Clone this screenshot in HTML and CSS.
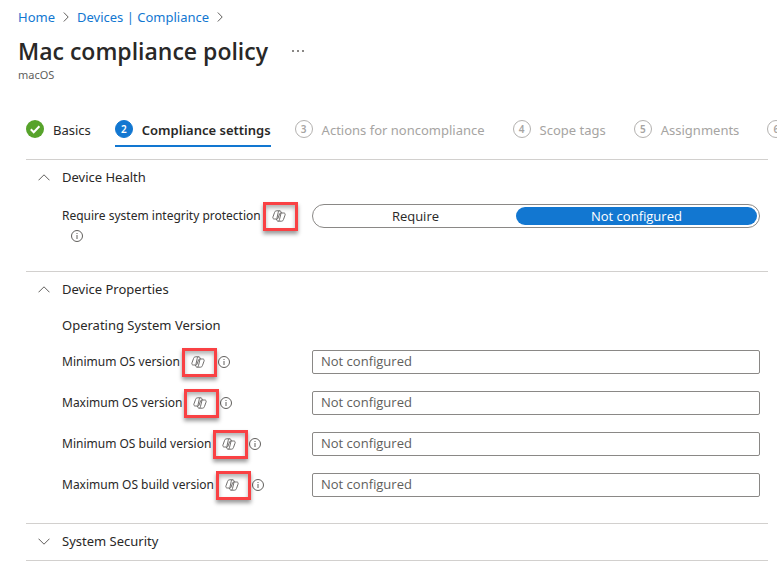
FILE: index.html
```html
<!DOCTYPE html>
<html lang="en">
<head>
<meta charset="utf-8">
<meta name="viewport" content="width=device-width, initial-scale=1">
<title>Mac compliance policy</title>
<link rel="stylesheet" href="styles.css">
</head>
<body>
<svg width="0" height="0" class="sprite" aria-hidden="true">
  <symbol id="copilot" viewBox="0 0 14 12">
    <path d="M7.500.8H4.600C3.400.8 2.900 1.500 2.500 2.600L1 6.800C.5 8.300 1.100 9 2.300 9h2.600c.7 0 1-.3 1.200-1L7.500 4c.3-.7.6-1 1.300-1h2.900c1.200 0 1.800.7 1.300 2.200l-1.500 4.200c-.4 1.100-.9 1.800-2.100 1.800H6.300"/>
    <path d="M7.500.8c1.200 0 1.600.8 1.900 2.200M6.300 11.200C5.100 11.200 4.700 10.400 4.400 9M9 3.200 7.500 9.500c-.3 1.100-.6 1.700-1.200 1.700M7.500.8C6.800.8 6.500 1.400 6.200 2.500L4.900 8.500"/>
  </symbol>
  <symbol id="info" viewBox="0 0 12 12">
    <circle cx="6" cy="6" r="5.500"/>
    <path d="M6 5v4M6 3v1"/>
  </symbol>
  <symbol id="chevron" viewBox="0 0 12 7">
    <path d="M.5 6.300 6 .8l5.500 5.500"/>
  </symbol>
</svg>

<header class="header">
  <nav class="breadcrumb" aria-label="Breadcrumb">
    <a href="#">Home</a>
    <svg class="separator" viewBox="0 0 6 10" aria-hidden="true"><path d="M.8.5 5.200 5 .8 9.500"/></svg>
    <a href="#">Devices | Compliance</a>
    <svg class="separator" viewBox="0 0 6 10" aria-hidden="true"><path d="M.8.5 5.200 5 .8 9.500"/></svg>
  </nav>
  <div class="title-row">
    <h1>Mac compliance policy</h1>
    <button class="more" type="button" aria-label="More actions"><svg viewBox="0 0 12 2"><path d="M0 0h2v2H0zM5 0h2v2H5zM10 0h2v2h-2z"/></svg></button>
  </div>
  <p class="subtitle">macOS</p>
</header>

<nav class="steps" aria-label="Steps">
  <a class="step done" href="#"><span class="badge"><svg viewBox="0 0 18 18" aria-hidden="true"><path d="m4.800 9.300 2.900 2.900 5.700-6"/></svg></span>Basics</a>
  <a class="step current" href="#" aria-current="step"><span class="badge">2</span>Compliance settings</a>
  <a class="step upcoming" href="#"><span class="badge">3</span>Actions for noncompliance</a>
  <a class="step upcoming" href="#"><span class="badge">4</span>Scope tags</a>
  <a class="step upcoming" href="#"><span class="badge">5</span>Assignments</a>
  <a class="step upcoming" href="#" aria-label="Step 6"><span class="badge">6</span></a>
</nav>

<main>
  <section class="group">
    <h2><button class="toggle" type="button" aria-expanded="true"><svg class="chevron"><use href="#chevron"/></svg>Device Health</button></h2>
    <div class="fields">
      <div class="field">
        <div class="label wrap"><span id="integrity">Require system integrity protection</span><button class="copilot" type="button" aria-label="Copilot"><svg><use href="#copilot"/></svg></button><button class="info" type="button" aria-label="Info"><svg><use href="#info"/></svg></button></div>
        <div class="segmented" role="radiogroup" aria-labelledby="integrity">
          <label><input type="radio" name="integrity"><span>Require</span></label>
          <label class="wide"><input type="radio" name="integrity" checked><span>Not configured</span></label>
        </div>
      </div>
    </div>
  </section>

  <section class="group">
    <h2><button class="toggle" type="button" aria-expanded="true"><svg class="chevron"><use href="#chevron"/></svg>Device Properties</button></h2>
    <h3>Operating System Version</h3>
    <div class="fields">
      <div class="field">
        <div class="label"><label for="min-os">Minimum OS version</label><button class="copilot" type="button" aria-label="Copilot"><svg><use href="#copilot"/></svg></button><button class="info" type="button" aria-label="Info"><svg><use href="#info"/></svg></button></div>
        <input class="text" id="min-os" type="text" placeholder="Not configured">
      </div>
      <div class="field">
        <div class="label"><label for="max-os">Maximum OS version</label><button class="copilot" type="button" aria-label="Copilot"><svg><use href="#copilot"/></svg></button><button class="info" type="button" aria-label="Info"><svg><use href="#info"/></svg></button></div>
        <input class="text" id="max-os" type="text" placeholder="Not configured">
      </div>
      <div class="field">
        <div class="label"><label for="min-build">Minimum OS build version</label><button class="copilot" type="button" aria-label="Copilot"><svg><use href="#copilot"/></svg></button><button class="info" type="button" aria-label="Info"><svg><use href="#info"/></svg></button></div>
        <input class="text" id="min-build" type="text" placeholder="Not configured">
      </div>
      <div class="field">
        <div class="label"><label for="max-build">Maximum OS build version</label><button class="copilot" type="button" aria-label="Copilot"><svg><use href="#copilot"/></svg></button><button class="info" type="button" aria-label="Info"><svg><use href="#info"/></svg></button></div>
        <input class="text" id="max-build" type="text" placeholder="Not configured">
      </div>
    </div>
  </section>

  <section class="group closed">
    <h2><button class="toggle" type="button" aria-expanded="false"><svg class="chevron"><use href="#chevron"/></svg>System Security</button></h2>
  </section>
</main>
</body>
</html>
```
FILE: styles.css
```css
*,
*::after {
  box-sizing: border-box;
}

body {
  margin: 0;
  overflow-x: hidden;
  background: #fff;
  color: #292827;
  font: 13px/20px "Segoe UI", "Noto Sans", "Open Sans", sans-serif;
}

h1, h2, h3, p {
  margin: 0;
  font-weight: 400;
}

button {
  padding: 0;
  border: 0;
  background: none;
  color: inherit;
  font: inherit;
}

svg {
  display: block;
  flex: none;
  fill: none;
  stroke: #605e5c;
}

.sprite {
  position: absolute;
}

.header {
  padding: 7px 18px 0;
}

.breadcrumb {
  display: flex;
  align-items: center;
  gap: 8px;
}

.breadcrumb a {
  color: #1277d1;
  text-decoration: none;
}

.separator {
  width: 6px;
  height: 10px;
}

.title-row {
  display: flex;
  align-items: center;
  gap: 24px;
  margin-top: 8px;
}

h1 {
  font-family: "Segoe UI", "Open Sans", sans-serif;
  font-size: 23px;
  line-height: 32px;
  font-weight: 600;
}

.more svg {
  width: 12px;
  height: 2px;
  fill: #8a8886;
  stroke: none;
}

.subtitle {
  color: #605e5c;
  font-size: 11px;
  line-height: 16px;
}

.steps {
  display: flex;
  gap: 24px;
  margin: 32px 0 12px 26px;
  overflow: hidden;
}

.step {
  display: flex;
  flex: none;
  align-items: center;
  gap: 9px;
  height: 32px;
  border-bottom: 2px solid transparent;
  color: #a6a4a2;
  text-decoration: none;
}

.upcoming {
  padding-right: 4px;
}

.badge {
  display: grid;
  place-items: center;
  width: 18px;
  height: 18px;
  margin-bottom: 3px;
  border: 1px solid #b3b1af;
  border-radius: 50%;
  font-size: 10px;
  line-height: 16px;
  font-weight: 600;
}

.done {
  color: #292827;
}

.done .badge {
  border: 0;
  background: #57a32b;
}

.badge svg {
  width: 18px;
  height: 18px;
  stroke: #fff;
  stroke-width: 2;
}

.current {
  border-color: #1277d1;
  color: #292827;
  font-weight: 600;
}

.current .badge {
  border-color: #1277d1;
  background: #1277d1;
  color: #fff;
}

.group {
  margin: 0 9px 0 26px;
  padding: 7px 8px 26px 12px;
  border-top: 1px solid #d2d0ce;
}

.closed {
  padding-bottom: 9px;
  border-bottom: 1px solid #d2d0ce;
}

.toggle {
  display: flex;
  align-items: center;
  gap: 12px;
}

.chevron {
  width: 12px;
  height: 7px;
}

.closed .chevron {
  transform: rotate(180deg);
}

h2 {
  font-size: 13px;
}

h3 {
  margin: 16px 0 15px 24px;
  font-size: 13px;
}

.fields {
  display: grid;
  gap: 17px;
  padding-left: 24px;
}

h2 + .fields {
  padding-top: 17px;
}

.field {
  display: grid;
  grid-template-columns: 250px 1fr;
  align-items: start;
}

.label {
  display: flex;
  align-items: center;
  min-height: 24px;
  font-size: 12px;
  white-space: nowrap;
}

.wrap {
  flex-wrap: wrap;
  align-content: flex-start;
  row-gap: 4px;
  min-height: 41px;
  padding: 2px 16px 0 0;
}

.copilot {
  position: relative;
  margin-left: 11px;
}

.copilot svg {
  width: 14px;
  height: 12px;
  stroke-width: .9;
}

.copilot::after {
  content: "";
  position: absolute;
  top: -8px;
  left: -9px;
  width: 35px;
  height: 29px;
  border: 3px solid #f94144;
  box-shadow: 0 3px 4px rgba(0, 0, 0, .4), inset 0 3px 4px rgba(0, 0, 0, .3);
}

.info {
  margin-left: 13px;
}

.info svg {
  width: 12px;
  height: 12px;
}

.wrap .info {
  margin-left: 9px;
}

.segmented {
  display: flex;
  height: 24px;
  padding: 2px;
  border: 1px solid #8a8886;
  border-radius: 12px;
  font-family: "Segoe UI", "Open Sans", sans-serif;
}

.segmented label {
  position: relative;
  flex: 5;
}

.segmented .wide {
  flex: 6;
}

.segmented input {
  position: absolute;
  margin: 0;
  opacity: 0;
}

.segmented span {
  display: block;
  border-radius: 9px;
  line-height: 18px;
  text-align: center;
}

.segmented input:checked + span {
  background: #1277d1;
  color: #fff;
}

.text {
  width: 100%;
  height: 24px;
  padding: 0 8px 2px;
  border: 1px solid #8a8886;
  border-radius: 2px;
  background: #fff;
  color: #292827;
  font: 13px/20px "Segoe UI", "Open Sans", sans-serif;
}

.text::placeholder {
  color: #605e5c;
  opacity: 1;
}
```
